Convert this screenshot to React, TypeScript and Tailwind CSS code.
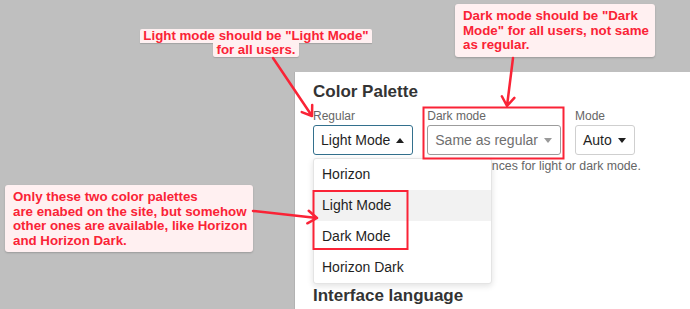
import React from 'react';

const RED = '#fa2336';

type Pt = [number, number];

function arrowPath(from: Pt, to: Pt, barb = 11, spread = 35) {
  const ang = Math.atan2(to[1] - from[1], to[0] - from[0]) + Math.PI;
  const r = (spread * Math.PI) / 180;
  const b1: Pt = [to[0] + barb * Math.cos(ang + r), to[1] + barb * Math.sin(ang + r)];
  const b2: Pt = [to[0] + barb * Math.cos(ang - r), to[1] + barb * Math.sin(ang - r)];
  return `M${from[0]} ${from[1]} L${to[0]} ${to[1]} M${b1[0]} ${b1[1]} L${to[0]} ${to[1]} L${b2[0]} ${b2[1]}`;
}

function Caret({ up = false, color = '#222' }: { up?: boolean; color?: string }) {
  return (
    <svg width="8" height="5" viewBox="0 0 8 5" className="shrink-0">
      {up ? <path d="M0 5 L4 0 L8 5 Z" fill={color} /> : <path d="M0 0 L8 0 L4 5 Z" fill={color} />}
    </svg>
  );
}

function SelectBox({
  label,
  value,
  open,
  muted,
  border,
  children,
}: {
  label: string;
  value: string;
  open?: boolean;
  muted?: boolean;
  border: string;
  children?: React.ReactNode;
}) {
  return (
    <div className="flex flex-col">
      <span className="text-[12px] leading-[16px] text-[#666]">{label}</span>
      <div className="relative mt-[1px]">
        <div
          className={`h-[30px] flex items-center gap-[6px] pl-[7px] pr-[8px] rounded-[3px] border bg-white text-[14px] ${border} ${
            muted ? 'text-[#6f6f6f]' : 'text-[#1f1f1f]'
          }`}
        >
          <span className="whitespace-nowrap">{value}</span>
          <Caret up={open} color={muted ? '#9a9a9a' : '#1f1f1f'} />
        </div>
        {children}
      </div>
    </div>
  );
}

const paletteOptions = ['Horizon', 'Light Mode', 'Dark Mode', 'Horizon Dark'];

export default function App() {
  return (
    <div
      className="relative w-[690px] h-[309px] overflow-hidden bg-[#bfbfbf] flex"
      style={{ fontFamily: '"Liberation Sans", Arial, sans-serif' }}
    >
      <div className="w-[294px] shrink-0" />

      {/* preferences panel */}
      <div className="flex-1 mt-[72px] bg-white border-l border-[#b2b2b2] pl-[18px] pt-[10px] text-[#222]">
        <h2 className="text-[17px] leading-[20px] font-bold text-[#333]">Color Palette</h2>

        <div className="flex gap-[14px] mt-[6px]">
          <SelectBox label="Regular" value="Light Mode" open border="border-[#33708d]">
            <div className="absolute left-0 top-[33px] w-[179px] z-10 bg-white border border-[#e4e4e4] rounded-[3px] shadow-[0_2px_6px_rgba(0,0,0,0.12)]">
              {paletteOptions.map((opt) => (
                <div
                  key={opt}
                  className={`h-[31px] flex items-center px-[8px] text-[14px] text-[#1f1f1f] ${
                    opt === 'Light Mode' ? 'bg-[#f2f2f2]' : ''
                  }`}
                >
                  {opt}
                </div>
              ))}
            </div>
          </SelectBox>
          <SelectBox label="Dark mode" value="Same as regular" muted border="border-[#9c9c9c]" />
          <SelectBox label="Mode" value="Auto" border="border-[#cfcfcf]" />
        </div>

        <p className="mt-[3px] text-[12.3px] leading-[16px] text-[#666] whitespace-nowrap">
          Set different color palette preferences for light or dark mode.
        </p>

        <h2 className="mt-[112px] text-[17px] leading-[20px] font-bold text-[#333]">Interface language</h2>
      </div>

      {/* annotations */}
      <div
        className="absolute left-[140px] top-[29px] w-[232px] flex flex-col items-center text-[13.3px] leading-[14px] font-bold z-20"
        style={{ color: RED }}
      >
        <span className="px-[3px] bg-[#fff0f1] rounded-t-[2px] shadow-[0_1px_1px_rgba(0,0,0,0.15)] whitespace-nowrap">
          Light mode should be "Light Mode"
        </span>
        <span className="px-[3px] bg-[#fff0f1] rounded-b-[2px] shadow-[0_1px_1px_rgba(0,0,0,0.15)] whitespace-nowrap">
          for all users.
        </span>
      </div>

      <div
        className="absolute left-[455px] top-[4px] w-[200px] h-[53px] px-[8px] pt-[5px] bg-[#fff0f1] rounded-[3px] shadow-[0_1px_2px_rgba(0,0,0,0.2)] text-[13.3px] leading-[14.5px] font-bold z-20"
        style={{ color: RED }}
      >
        <div className="whitespace-nowrap">Dark mode should be "Dark</div>
        <div className="whitespace-nowrap">Mode" for all users, not same</div>
        <div className="whitespace-nowrap">as regular.</div>
      </div>

      <div
        className="absolute left-[5px] top-[185px] w-[248px] h-[67px] px-[8px] pt-[5px] bg-[#fff0f1] rounded-[3px] shadow-[0_1px_2px_rgba(0,0,0,0.2)] text-[13.3px] leading-[14.5px] font-bold z-20"
        style={{ color: RED }}
      >
        <div className="whitespace-nowrap">Only these two color palettes</div>
        <div className="whitespace-nowrap">are enabed on the site, but somehow</div>
        <div className="whitespace-nowrap">other ones are available, like Horizon</div>
        <div className="whitespace-nowrap">and Horizon Dark.</div>
      </div>

      <svg className="absolute inset-0 pointer-events-none z-30" width="690" height="309" viewBox="0 0 690 309">
        <g fill="none" stroke={RED} strokeWidth="2.5" strokeLinecap="round" strokeLinejoin="round">
          <path d={arrowPath([273, 58], [312, 116])} />
          <path d={arrowPath([513, 58], [507, 106])} />
          <path d={arrowPath([253, 211], [317, 218])} />
        </g>
        <g fill="none" stroke={RED} strokeWidth="2">
          <rect x="423.5" y="107.5" width="140" height="51" />
          <rect x="313.5" y="191" width="94" height="58" />
        </g>
      </svg>
    </div>
  );
}
